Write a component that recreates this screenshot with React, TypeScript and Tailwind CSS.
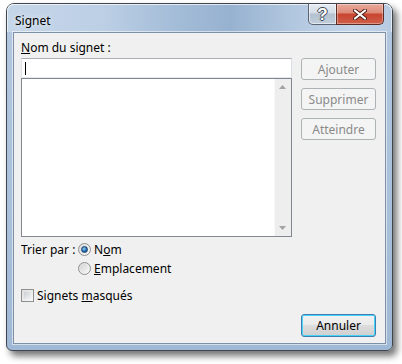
import React from "react";

const font = { fontFamily: '"Noto Sans", "Open Sans", sans-serif' };

function TitleButtons() {
  return (
    <div className="ml-auto mr-[8px] flex h-[21px] self-start">
      {/* help */}
      <div className="flex w-[29px] items-center justify-center rounded-bl-[5px] border border-t-0 border-[#5a6472] bg-[linear-gradient(to_bottom,#e6ecf3_0%,#d3dce7_45%,#b3c0cf_50%,#c2cedb_100%)] shadow-[inset_0_0_0_1px_rgba(255,255,255,0.55)]">
        <span
          className="text-[17px] font-bold leading-none text-white [text-shadow:1px_0_0_#3d4652,-1px_0_0_#3d4652,0_1px_0_#3d4652,0_-1px_0_#3d4652]"
          style={{ fontFamily: '"Liberation Sans", sans-serif' }}
        >
          ?
        </span>
      </div>
      {/* close */}
      <div className="-ml-px flex w-[48px] items-center justify-center rounded-br-[5px] border border-t-0 border-[#5c2b22] bg-[linear-gradient(to_bottom,#e9a99b_0%,#dd8a78_45%,#c8432f_50%,#d0614a_100%)] shadow-[inset_0_0_0_1px_rgba(255,255,255,0.35)]">
        <svg width="14" height="11" viewBox="0 0 14 11">
          <path d="M2 1.5 L12 9.5 M12 1.5 L2 9.5" stroke="#4b2018" strokeWidth="4" strokeLinecap="round" />
          <path d="M2 1.5 L12 9.5 M12 1.5 L2 9.5" stroke="#ffffff" strokeWidth="2.2" strokeLinecap="round" />
        </svg>
      </div>
    </div>
  );
}

function Btn({ label, enabled, def }: { label: string; enabled?: boolean; def?: boolean }) {
  if (def) {
    return (
      <div className="flex h-[23px] w-[75px] items-center justify-center rounded-[3px] border border-[#3c7fb1] bg-[linear-gradient(to_bottom,#f2f2f2_0%,#ebebeb_45%,#dddddd_50%,#cfcfcf_100%)] text-[12px] text-black shadow-[inset_0_0_0_1px_#48d2fc]">
        {label}
      </div>
    );
  }
  return (
    <div
      className={
        "flex h-[22px] w-[75px] items-center justify-center rounded-[3px] border border-[#adb2b5] bg-[#f4f4f4] text-[12px] " +
        (enabled ? "text-black" : "text-[#8a8a8a]")
      }
    >
      {label}
    </div>
  );
}

function Radio({ checked }: { checked?: boolean }) {
  return (
    <div className="flex h-[13px] w-[13px] items-center justify-center rounded-full border border-[#8e8f8f] bg-[linear-gradient(135deg,#dcdcdc,#fafafa)]">
      {checked ? (
        <div className="h-[7px] w-[7px] rounded-full border border-[#1a3f66] bg-[radial-gradient(circle_at_40%_35%,#9fd7f7_0%,#2f7fc6_45%,#0e3b6e_100%)]" />
      ) : (
        <div className="h-[9px] w-[9px] rounded-full bg-[linear-gradient(135deg,#d4d4d4,#f7f7f7)]" />
      )}
    </div>
  );
}

export default function App() {
  return (
    <div className="h-[364px] w-[402px] overflow-hidden bg-white pl-[6px] pt-[3px]" style={font}>
      <div className="flex h-[348px] w-[387px] flex-col rounded-t-[8px] rounded-b-[6px] border border-[#3f4650] bg-[linear-gradient(to_bottom,#b3c8df_0%,#a9c0da_60%,#9fb8d5_100%)] shadow-[4px_5px_7px_rgba(0,0,0,0.55)]">
        <div className="flex h-[28px] rounded-t-[7px] bg-[linear-gradient(to_right,#c6d6e9_0%,#bccfe5_25%,#a2bbd7_45%,#97b2d0_58%,#b3c8e0_75%,#c4d5e9_90%,#b6cae1_100%)] shadow-[inset_0_1px_0_rgba(255,255,255,0.7),inset_1px_0_0_rgba(255,255,255,0.6),inset_-1px_0_0_rgba(255,255,255,0.6)]">
          <span className="pl-[8px] pt-[9px] text-[12px] leading-[15px] text-black [text-shadow:0_0_6px_rgba(255,255,255,0.9)]">
            Signet
          </span>
          <TitleButtons />
        </div>
        <div className="mx-[6px] mb-[6px] flex flex-1 flex-col border border-[#7d90a8] bg-[#f0f0f0] pb-[6px] pl-[7px] pr-[9px] pt-[7px] text-[12px] leading-[15px] text-black shadow-[0_0_0_1px_rgba(255,255,255,0.55)]">
          <div>
            <u>N</u>om du signet :
          </div>
          <div className="mt-[3px] flex gap-[9px]">
            <div className="flex w-[272px] flex-col">
              <div className="flex h-[20px] items-center border border-[#abadb3] border-b-[#e3e9ef] border-l-[#e2e3ea] border-r-[#dbdfe6] bg-white pl-[3px]">
                <div className="h-[13px] w-px bg-black" />
              </div>
              <div className="flex h-[159px] border border-[#828790] bg-white">
                <div className="flex-1" />
                <div className="flex w-[17px] flex-col items-center justify-between bg-[#eeeeee] py-[6px] shadow-[inset_1px_0_0_#f8f8f8]">
                  <svg width="7" height="4" viewBox="0 0 7 4">
                    <path d="M3.5 0 L7 4 L0 4 Z" fill="#a3a3a3" />
                  </svg>
                  <svg width="7" height="4" viewBox="0 0 7 4">
                    <path d="M0 0 L7 0 L3.5 4 Z" fill="#a3a3a3" />
                  </svg>
                </div>
              </div>
            </div>
            <div className="flex flex-col gap-[8px]">
              <Btn label="Ajouter" />
              <Btn label="Supprimer" />
              <Btn label="Atteindre" />
            </div>
          </div>
          <div className="mt-[3px] grid grid-cols-[57px_auto] grid-rows-[19px_19px]">
            <div className="flex items-center">Trier par :</div>
            <div className="flex items-center gap-[3px]">
              <Radio checked />
              <span>
                N<u>o</u>m
              </span>
            </div>
            <div />
            <div className="flex items-center gap-[3px]">
              <Radio />
              <span>
                <u>E</u>mplacement
              </span>
            </div>
          </div>
          <div className="mt-[8px] flex h-[19px] items-center gap-[3px]">
            <div className="h-[13px] w-[13px] border border-[#8e8f8f] bg-[linear-gradient(135deg,#dcdcdc,#fafafa)] p-[2px]">
              <div className="h-full w-full bg-[linear-gradient(135deg,#cbcfd5,#f3f3f3)]" />
            </div>
            <span>
              Signets <u>m</u>asqués
            </span>
          </div>
          <div className="mt-auto flex justify-end">
            <Btn label="Annuler" def />
          </div>
        </div>
      </div>
    </div>
  );
}
